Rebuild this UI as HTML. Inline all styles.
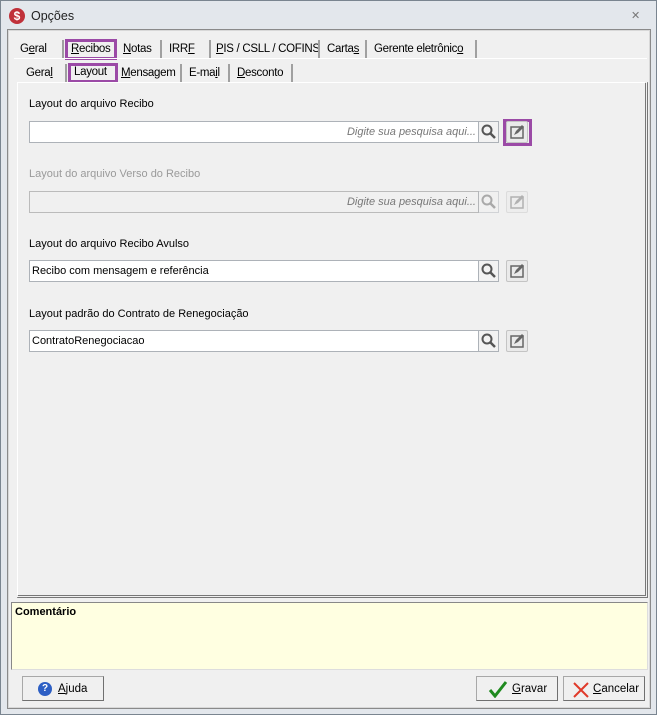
<!DOCTYPE html>
<html><head><meta charset="utf-8"><style>
*{box-sizing:border-box;margin:0;padding:0}
body{width:657px;height:715px;background:#e3e7ec;font-family:"Liberation Sans","DejaVu Sans",sans-serif;font-size:12px;color:#000;position:relative;overflow:hidden}
.a{position:absolute}
.win{left:0;top:0;width:657px;height:715px;border:1px solid #7a8590}
.tab{position:absolute;height:19px;background:#f0f0f0;border-right:2px solid #a0a0a0;padding:3px 0 0 6px;font-size:11.5px;letter-spacing:-0.3px;white-space:nowrap;overflow:hidden}
.hl{border:3px solid #9b4aa6;background:#f0f0f0}
.lbl{position:absolute;left:29px;font-size:11px}
.inp{position:absolute;left:29px;width:450px;height:22px;background:#fff;border:1px solid #adb2b8;font-size:11px;padding:4px 2px}
.ph{position:absolute;right:2px;top:4px;font-style:italic;color:#777}
.sb{position:absolute;left:478px;width:21px;height:22px;background:#f2f2f2;border:1px solid #adb2b8}
.eb{position:absolute;left:506px;width:22px;height:22px;background:#eaeaea;border:1px solid #c4c4c4;border-radius:2px}
.btn{position:absolute;top:676px;height:25px;background:#f0f0f0;border:1px solid #a8a8a8;border-right-color:#707070;border-bottom-color:#707070;font-size:11.5px;padding:5px 0 0 0}
.dis{opacity:.45}
</style></head><body>
<div class="a win"></div>
<div class="a" style="left:9px;top:8px;width:16px;height:16px;border-radius:50%;background:#c0313a;color:#fff;font-weight:bold;font-size:12px;text-align:center;line-height:16px">$</div>
<div class="a" style="left:31px;top:9px;font-size:12.5px;color:#222">Opções</div>
<div class="a" style="left:631px;top:9px;font-size:11px;color:#777">✕</div>
<div class="a" style="left:7px;top:29px;width:644px;height:680px;background:#f0f0f0;border:1px solid #8a8a8a"></div>
<div class="a" style="left:8px;top:30px;width:642px;height:678px;border:1px solid #d8d8d8"></div>
<div class="tab" style="left:14px;top:40px;width:50px">G<u>e</u>ral</div>
<div class="tab hl" style="left:65px;top:39px;width:52px;height:21px;padding:1px 0 0 3px"><u>R</u>ecibos</div>
<div class="tab" style="left:117px;top:40px;width:45px"><u>N</u>otas</div>
<div class="tab" style="left:163px;top:40px;width:48px">IRR<u>F</u></div>
<div class="tab" style="left:212px;top:40px;width:108px;padding-left:4px"><u>P</u>IS / CSLL / COFINS</div>
<div class="tab" style="left:321px;top:40px;width:46px">Carta<u>s</u></div>
<div class="tab" style="left:368px;top:40px;width:109px">Gerente eletrônic<u>o</u></div>
<div class="a" style="left:14px;top:58px;width:633px;height:1px;background:#fff"></div>
<div class="tab" style="left:20px;top:64px;width:47px">Gera<u>l</u></div>
<div class="tab hl" style="left:68px;top:63px;width:50px;height:20px;padding:0 0 0 3px">Layout</div>
<div class="tab" style="left:118px;top:64px;width:64px;padding-left:3px"><u>M</u>ensagem</div>
<div class="tab" style="left:183px;top:64px;width:47px">E-ma<u>i</u>l</div>
<div class="tab" style="left:231px;top:64px;width:62px"><u>D</u>esconto</div>
<div class="a" style="left:17px;top:82px;width:631px;height:516px;border:1px solid #fff;border-right:3px double #777;border-bottom:3px double #777;background:#f0f0f0"></div>

<div class="lbl" style="top:98px">Layout do arquivo Recibo</div>
<div class="inp" style="top:121px"><span class="ph">Digite sua pesquisa aqui...</span></div>
<div class="sb" style="top:121px"><svg width="19" height="20"><circle cx="8" cy="8" r="4.5" fill="none" stroke="#555" stroke-width="2"/><path d="M11 11l5 5" stroke="#555" stroke-width="2.5"/></svg></div>
<div class="a" style="left:503px;top:119px;width:29px;height:27px;border:3px solid #9b4aa6"></div>
<div class="eb" style="top:121px"><svg width="20" height="20"><rect x="4" y="5" width="12" height="11" fill="none" stroke="#666" stroke-width="1.5"/><path d="M7 13l2-4 6-6 2 2-6 6z" fill="#666"/></svg></div>

<div class="lbl" style="top:168px;color:#9a9a9a">Layout do arquivo Verso do Recibo</div>
<div class="inp" style="top:191px;background:#f0f0f0;border-color:#bbb"><span class="ph">Digite sua pesquisa aqui...</span></div>
<div class="sb dis" style="top:191px"><svg width="19" height="20"><circle cx="8" cy="8" r="4.5" fill="none" stroke="#555" stroke-width="2"/><path d="M11 11l5 5" stroke="#555" stroke-width="2.5"/></svg></div>
<div class="eb dis" style="top:191px"><svg width="20" height="20"><rect x="4" y="5" width="12" height="11" fill="none" stroke="#666" stroke-width="1.5"/><path d="M7 13l2-4 6-6 2 2-6 6z" fill="#666"/></svg></div>

<div class="lbl" style="top:238px">Layout do arquivo Recibo Avulso</div>
<div class="inp" style="top:260px">Recibo com mensagem e referência</div>
<div class="sb" style="top:260px"><svg width="19" height="20"><circle cx="8" cy="8" r="4.5" fill="none" stroke="#555" stroke-width="2"/><path d="M11 11l5 5" stroke="#555" stroke-width="2.5"/></svg></div>
<div class="eb" style="top:260px"><svg width="20" height="20"><rect x="4" y="5" width="12" height="11" fill="none" stroke="#666" stroke-width="1.5"/><path d="M7 13l2-4 6-6 2 2-6 6z" fill="#666"/></svg></div>

<div class="lbl" style="top:308px">Layout padrão do Contrato de Renegociação</div>
<div class="inp" style="top:330px">ContratoRenegociacao</div>
<div class="sb" style="top:330px"><svg width="19" height="20"><circle cx="8" cy="8" r="4.5" fill="none" stroke="#555" stroke-width="2"/><path d="M11 11l5 5" stroke="#555" stroke-width="2.5"/></svg></div>
<div class="eb" style="top:330px"><svg width="20" height="20"><rect x="4" y="5" width="12" height="11" fill="none" stroke="#666" stroke-width="1.5"/><path d="M7 13l2-4 6-6 2 2-6 6z" fill="#666"/></svg></div>

<div class="a" style="left:11px;top:602px;width:637px;height:68px;background:#ffffe1;border:1px solid #888;border-right-color:#ddd;border-bottom-color:#ddd;padding:3px 3px;font-weight:bold;font-size:11px">Comentário</div>

<div class="btn" style="left:22px;width:82px"><span style="position:absolute;left:15px;top:5px;width:14px;height:14px;border-radius:50%;background:#2d5fc4;color:#fff;font-size:10px;font-weight:bold;text-align:center;line-height:14px">?</span><span style="position:absolute;left:35px;top:6px"><u>A</u>juda</span></div>
<div class="btn" style="left:476px;width:82px"><svg style="position:absolute;left:11px;top:3px" width="20" height="18"><path d="M2 10l5 6L18 2" fill="none" stroke="#1f8a1f" stroke-width="3"/></svg><span style="position:absolute;left:35px;top:6px"><u>G</u>ravar</span></div>
<div class="btn" style="left:563px;width:82px"><svg style="position:absolute;left:8px;top:4px" width="18" height="18"><path d="M2 2l14 14M16 2L2 16" stroke="#e03a2a" stroke-width="2"/></svg><span style="position:absolute;left:29px;top:6px"><u>C</u>ancelar</span></div>
</body></html>
